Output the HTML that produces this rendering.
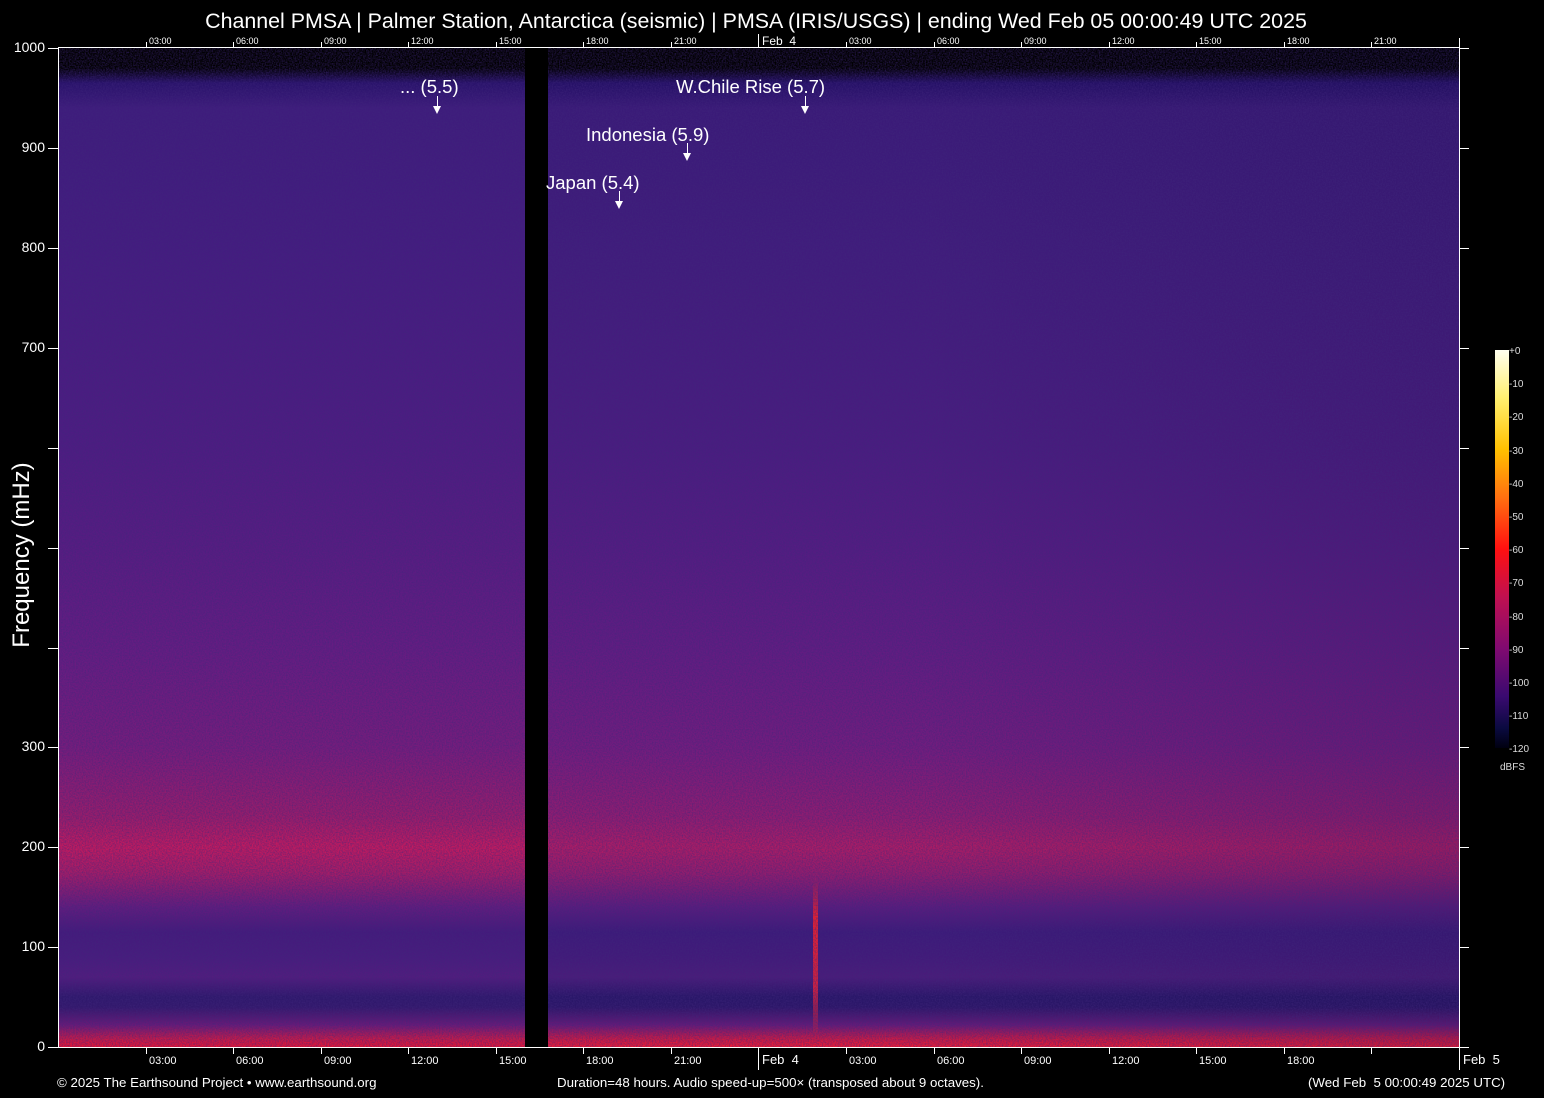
<!DOCTYPE html>
<html><head><meta charset="utf-8"><style>
body{margin:0;width:1544px;height:1098px;background:#000;position:relative;overflow:hidden;font-family:"Liberation Sans",sans-serif;color:#fff}
.a{position:absolute;white-space:nowrap}
.plot{position:absolute;left:58px;top:48px;width:1401px;height:999px;overflow:hidden}
.sp{position:absolute;top:0;height:999px}
.tl{font-size:9px;top:36px}
.bl{font-size:11px;top:1055px}
.tk{position:absolute;background:#fff;width:1px}
.yl{font-size:14px;text-align:right;width:40px;left:5px}
.ev{font-size:18.5px}
.arr{position:absolute;width:1px;height:12px;background:#fff}
.arr:after{content:"";position:absolute;left:-4px;top:10px;border-left:4.5px solid transparent;border-right:4.5px solid transparent;border-top:8px solid #fff}
</style></head><body>
<div class="a" style="left:0;width:1512px;text-align:center;top:9px;font-size:21.4px">Channel PMSA | Palmer Station, Antarctica (seismic) | PMSA (IRIS/USGS) | ending Wed Feb 05 00:00:49 UTC 2025</div>

<div class="plot">
 <div class="sp" style="left:0;width:467px;background:linear-gradient(#000 0%,#000 2%,#28126a 3.5%,#3e1c7c 6%,#441c80 20%,#4e1c82 40%,#581c82 50%,#661c82 60%,#781c7c 70%,#9c1c6a 77%,#c41a5e 80%,#a81c66 82.5%,#621c7e 86%,#441a7c 88.5%,#481c7e 91%,#521c7e 93%,#2e186c 95%,#32186c 96%,#6a1a78 97.8%,#c81a48 99.2%,#e81434 100%)"></div>
 <div class="sp" style="left:467px;width:23px;background:#000"></div>
 <div class="sp" style="left:490px;width:911px;background:linear-gradient(#000 0%,#000 2%,#241066 3.5%,#3a1a78 6%,#401c7c 20%,#4a1c80 40%,#541c82 50%,#621c82 60%,#741c7e 70%,#921c70 77%,#ae1c64 80%,#961c6c 82.5%,#5a1c7e 86%,#3c1a7a 88.5%,#421a7a 91%,#4a1c7a 93%,#281668 95%,#2c1668 96%,#661a78 97.8%,#cc1a44 99.2%,#f01a34 100%)"></div>
 <div class="sp" style="left:490px;width:911px;background:linear-gradient(90deg,rgba(10,5,50,0) 0%,rgba(10,5,50,0) 40%,rgba(10,5,50,0.12) 100%)"></div>
 <div class="sp" style="left:755px;top:830px;width:5px;height:155px;background:linear-gradient(rgba(230,30,40,0),#e82030 25%,#d02040 70%,rgba(200,30,60,0.3))"></div>
 <svg class="sp" style="left:0;width:1401px" width="1401" height="999"><filter id="n" x="0" y="0" width="100%" height="100%"><feTurbulence type="fractalNoise" baseFrequency="0.7" numOctaves="2" seed="3"/><feColorMatrix type="matrix" values="0 0 0 0 0.05  0 0 0 0 0.02  0 0 0 0 0.2  1.8 0 0 0 -0.55"/></filter><rect width="1401" height="999" filter="url(#n)" opacity=".6"/><rect x="467" y="0" width="23" height="999" fill="#000"/></svg>
</div>

<!-- axes -->
<div class="a" style="left:58px;top:47px;width:1402px;height:1px;background:#fff"></div>
<div class="a" style="left:58px;top:1047px;width:1402px;height:1px;background:#fff"></div>
<div class="a" style="left:58px;top:47px;width:1px;height:1001px;background:#fff"></div>
<div class="a" style="left:1459px;top:38px;width:1px;height:1032px;background:#fff"></div>

<!-- y ticks -->
<div class="tk" style="left:48px;top:48px;width:10px;height:1px"></div>
<div class="tk" style="left:48px;top:148px;width:10px;height:1px"></div>
<div class="tk" style="left:48px;top:248px;width:10px;height:1px"></div>
<div class="tk" style="left:48px;top:348px;width:10px;height:1px"></div>
<div class="tk" style="left:48px;top:448px;width:10px;height:1px"></div>
<div class="tk" style="left:48px;top:548px;width:10px;height:1px"></div>
<div class="tk" style="left:48px;top:648px;width:10px;height:1px"></div>
<div class="tk" style="left:48px;top:747px;width:10px;height:1px"></div>
<div class="tk" style="left:48px;top:847px;width:10px;height:1px"></div>
<div class="tk" style="left:48px;top:947px;width:10px;height:1px"></div>
<div class="tk" style="left:48px;top:1047px;width:10px;height:1px"></div>
<div class="tk" style="left:1459px;top:48px;width:10px;height:1px"></div>
<div class="tk" style="left:1459px;top:148px;width:10px;height:1px"></div>
<div class="tk" style="left:1459px;top:248px;width:10px;height:1px"></div>
<div class="tk" style="left:1459px;top:348px;width:10px;height:1px"></div>
<div class="tk" style="left:1459px;top:448px;width:10px;height:1px"></div>
<div class="tk" style="left:1459px;top:548px;width:10px;height:1px"></div>
<div class="tk" style="left:1459px;top:648px;width:10px;height:1px"></div>
<div class="tk" style="left:1459px;top:747px;width:10px;height:1px"></div>
<div class="tk" style="left:1459px;top:847px;width:10px;height:1px"></div>
<div class="tk" style="left:1459px;top:947px;width:10px;height:1px"></div>
<div class="tk" style="left:1459px;top:1047px;width:10px;height:1px"></div>
<div class="a yl" style="top:39px">1000</div>
<div class="a yl" style="top:139px">900</div>
<div class="a yl" style="top:239px">800</div>
<div class="a yl" style="top:339px">700</div>
<div class="a yl" style="top:738px">300</div>
<div class="a yl" style="top:838px">200</div>
<div class="a yl" style="top:938px">100</div>
<div class="a yl" style="top:1038px">0</div>
<div class="a" style="left:22px;top:555px;font-size:24px;transform:translate(-50%,-50%) rotate(-90deg)">Frequency (mHz)</div>

<!-- x ticks top -->
<div class="tk" style="left:146px;top:42px;height:6px"></div><div class="a tl" style="left:149px">03:00</div>
<div class="tk" style="left:233px;top:42px;height:6px"></div><div class="a tl" style="left:236px">06:00</div>
<div class="tk" style="left:321px;top:42px;height:6px"></div><div class="a tl" style="left:324px">09:00</div>
<div class="tk" style="left:408px;top:42px;height:6px"></div><div class="a tl" style="left:411px">12:00</div>
<div class="tk" style="left:496px;top:42px;height:6px"></div><div class="a tl" style="left:499px">15:00</div>
<div class="tk" style="left:583px;top:42px;height:6px"></div><div class="a tl" style="left:586px">18:00</div>
<div class="tk" style="left:671px;top:42px;height:6px"></div><div class="a tl" style="left:674px">21:00</div>
<div class="tk" style="left:758px;top:34px;height:14px"></div><div class="a" style="left:762px;top:34px;font-size:12px">Feb&nbsp;&nbsp;4</div>
<div class="tk" style="left:846px;top:42px;height:6px"></div><div class="a tl" style="left:849px">03:00</div>
<div class="tk" style="left:934px;top:42px;height:6px"></div><div class="a tl" style="left:937px">06:00</div>
<div class="tk" style="left:1021px;top:42px;height:6px"></div><div class="a tl" style="left:1024px">09:00</div>
<div class="tk" style="left:1109px;top:42px;height:6px"></div><div class="a tl" style="left:1112px">12:00</div>
<div class="tk" style="left:1196px;top:42px;height:6px"></div><div class="a tl" style="left:1199px">15:00</div>
<div class="tk" style="left:1284px;top:42px;height:6px"></div><div class="a tl" style="left:1287px">18:00</div>
<div class="tk" style="left:1371px;top:42px;height:6px"></div><div class="a tl" style="left:1374px">21:00</div>

<!-- x ticks bottom -->
<div class="tk" style="left:146px;top:1048px;height:6px"></div><div class="a bl" style="left:149px">03:00</div>
<div class="tk" style="left:233px;top:1048px;height:6px"></div><div class="a bl" style="left:236px">06:00</div>
<div class="tk" style="left:321px;top:1048px;height:6px"></div><div class="a bl" style="left:324px">09:00</div>
<div class="tk" style="left:408px;top:1048px;height:6px"></div><div class="a bl" style="left:411px">12:00</div>
<div class="tk" style="left:496px;top:1048px;height:6px"></div><div class="a bl" style="left:499px">15:00</div>
<div class="tk" style="left:583px;top:1048px;height:6px"></div><div class="a bl" style="left:586px">18:00</div>
<div class="tk" style="left:671px;top:1048px;height:6px"></div><div class="a bl" style="left:674px">21:00</div>
<div class="tk" style="left:758px;top:1048px;height:22px"></div><div class="a" style="left:762px;top:1052px;font-size:13px">Feb&nbsp;&nbsp;4</div>
<div class="tk" style="left:846px;top:1048px;height:6px"></div><div class="a bl" style="left:849px">03:00</div>
<div class="tk" style="left:934px;top:1048px;height:6px"></div><div class="a bl" style="left:937px">06:00</div>
<div class="tk" style="left:1021px;top:1048px;height:6px"></div><div class="a bl" style="left:1024px">09:00</div>
<div class="tk" style="left:1109px;top:1048px;height:6px"></div><div class="a bl" style="left:1112px">12:00</div>
<div class="tk" style="left:1196px;top:1048px;height:6px"></div><div class="a bl" style="left:1199px">15:00</div>
<div class="tk" style="left:1284px;top:1048px;height:6px"></div><div class="a bl" style="left:1287px">18:00</div>
<div class="tk" style="left:1371px;top:1048px;height:6px"></div>
<div class="a" style="left:1463px;top:1052px;font-size:13px">Feb&nbsp;&nbsp;5</div>

<!-- events -->
<div class="a ev" style="left:400px;top:76px">... (5.5)</div><div class="arr" style="left:437px;top:96px"></div>
<div class="a ev" style="left:676px;top:76px">W.Chile Rise (5.7)</div><div class="arr" style="left:805px;top:96px"></div>
<div class="a ev" style="left:586px;top:124px">Indonesia (5.9)</div><div class="arr" style="left:687px;top:143px"></div>
<div class="a ev" style="left:546px;top:172px">Japan (5.4)</div><div class="arr" style="left:619px;top:191px"></div>

<!-- colorbar -->
<div class="a" style="left:1495px;top:350px;width:14px;height:398px;background:linear-gradient(#fffff0 0%,#fff070 12%,#ffc000 25%,#ff7010 37%,#ff1010 50%,#c01050 62%,#800a70 75%,#3a0a70 87%,#0a0a40 95%,#000010 100%)"></div>
<div class="a" style="left:1509px;top:335px;font-size:10px;line-height:33.2px;color:#ddd">+0<br>-10<br>-20<br>-30<br>-40<br>-50<br>-60<br>-70<br>-80<br>-90<br>-100<br>-110<br>-120</div>
<div class="a" style="left:1500px;top:762px;font-size:10px;color:#ddd">dBFS</div>

<!-- footer -->
<div class="a" style="left:57px;top:1075px;font-size:13.3px">© 2025 The Earthsound Project • www.earthsound.org</div>
<div class="a" style="left:557px;top:1075px;font-size:13.3px">Duration=48 hours. Audio speed-up=500× (transposed about 9 octaves).</div>
<div class="a" style="left:1308px;top:1075px;font-size:13.3px">(Wed Feb&nbsp;&nbsp;5 00:00:49 2025 UTC)</div>
</body></html>
